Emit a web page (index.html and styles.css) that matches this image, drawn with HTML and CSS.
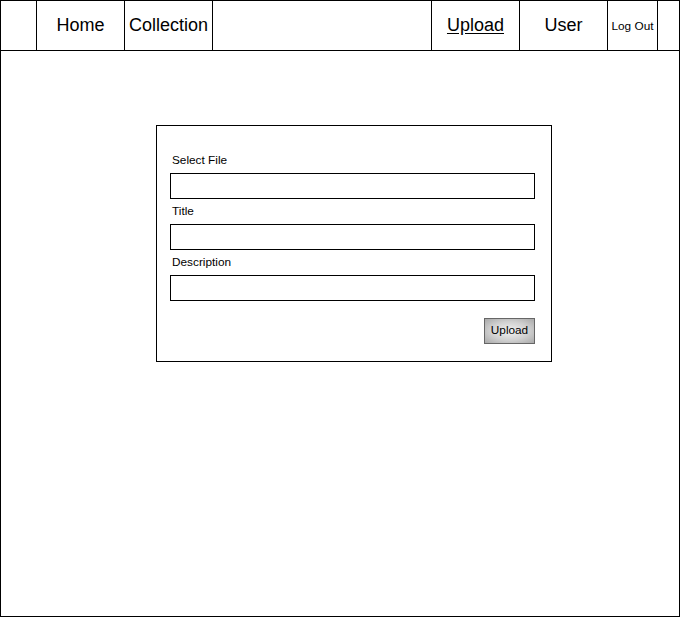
FILE: index.html
```html
<!DOCTYPE html>
<html>
<head>
<meta charset="utf-8">
<link rel="stylesheet" href="styles.css">
</head>
<body>
<div class="frame">
  <nav class="nav">
    <div class="cell cell-edge"></div>
    <div class="cell cell-item">Home</div>
    <div class="cell cell-item">Collection</div>
    <div class="cell cell-spacer"></div>
    <div class="cell cell-item active">Upload</div>
    <div class="cell cell-item">User</div>
    <div class="cell cell-small">Log Out</div>
    <div class="cell cell-last"></div>
  </nav>
  <main class="main">
    <form class="upload-form">
      <label class="field-label">Select File</label>
      <div class="field-input"></div>
      <label class="field-label">Title</label>
      <div class="field-input"></div>
      <label class="field-label">Description</label>
      <div class="field-input"></div>
      <div class="actions">
        <button type="button" class="btn">Upload</button>
      </div>
    </form>
  </main>
</div>
</body>
</html>
```
FILE: styles.css
```css
* { box-sizing: border-box; }
html, body { margin: 0; padding: 0; background: #fff; }
body { font-family: "Liberation Sans", Arial, sans-serif; color: #000; }

.frame {
  width: 680px;
  height: 617px;
  border: 1px solid #000;
  display: flex;
  flex-direction: column;
}

.nav {
  display: flex;
  height: 50px;
  border-bottom: 1px solid #000;
  flex: none;
}

.cell {
  border-right: 1px solid #000;
  display: flex;
  align-items: center;
  justify-content: center;
  height: 49px;
}
.cell-edge { width: 36px; }
.cell-item { width: 88px; font-size: 18px; }
.cell-spacer { flex: 1; }
.cell-small { width: 50px; font-size: 11.8px; }
.cell-last { width: 21px; border-right: none; }
.active { text-decoration: underline; text-underline-offset: 2px; }

.main {
  flex: 1;
  padding-top: 74px;
  padding-left: 155px;
}

.upload-form {
  width: 396px;
  height: 237px;
  border: 1px solid #000;
  padding: 22px 16px 0 13px;
  display: flex;
  flex-direction: column;
  margin: 0;
}

.field-label {
  display: block;
  font-size: 11.8px;
  line-height: 14px;
  margin: 5px 0 6px 2px;
}

.field-input {
  height: 26px;
  border: 1px solid #000;
  background: #fff;
}

.actions {
  display: flex;
  justify-content: flex-end;
  margin-top: 17px;
}

.btn {
  width: 51px;
  height: 26px;
  border: 1px solid #666;
  background: radial-gradient(ellipse at center, #f2f2f2 0%, #d0d0d0 55%, #a8a8a8 100%);
  font-family: "Liberation Sans", Arial, sans-serif;
  font-size: 11.8px;
  line-height: 14px;
  color: #000;
  padding: 0 0 2px 0;
  margin: 0;
  border-radius: 0;
}
```
